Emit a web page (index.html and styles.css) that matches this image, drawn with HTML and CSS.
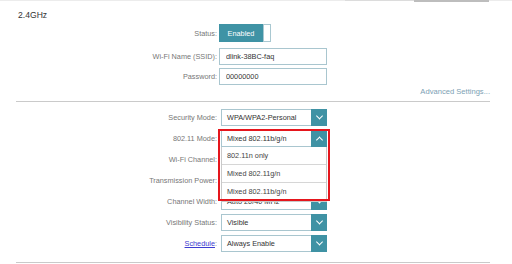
FILE: index.html
```html
<!DOCTYPE html>
<html lang="en">
<head>
  <meta charset="UTF-8" />
  <title>Wireless - 2.4GHz</title>
  <link rel="stylesheet" href="styles.css">
</head>
<body>
  <div class="tabline">
    <span class="tab"></span>
    <span class="tab active"></span>
  </div>
  <main class="panel">
    <h2>2.4GHz</h2>
    <div class="form basic">
      <div class="row status-row">
        <label>Status:</label>
        <div class="toggle"><span class="on">Enabled</span><span class="knob"></span></div>
      </div>
      <div class="row">
        <label>Wi-Fi Name (SSID):</label>
        <input class="field" type="text" value="dlink-38BC-faq">
      </div>
      <div class="row">
        <label>Password:</label>
        <input class="field" type="text" value="00000000">
      </div>
    </div>
    <div class="adv">Advanced Settings...</div>
    <div class="form advanced">
      <div class="row">
        <label>Security Mode:</label>
        <div class="select"><span>WPA/WPA2-Personal</span><i class="arrow down"></i></div>
      </div>
      <div class="row mode-row">
        <label>802.11 Mode:</label>
        <div class="select"><span>Mixed 802.11b/g/n</span><i class="arrow up"></i></div>
        <ul class="dropdown">
          <li>802.11n only</li>
          <li>Mixed 802.11g/n</li>
          <li>Mixed 802.11b/g/n</li>
        </ul>
        <div class="highlight"></div>
      </div>
      <div class="row">
        <label>Wi-Fi Channel:</label>
        <div class="select"><span></span><i class="arrow down"></i></div>
      </div>
      <div class="row">
        <label>Transmission Power:</label>
        <div class="select"><span></span><i class="arrow down"></i></div>
      </div>
      <div class="row">
        <label>Channel Width:</label>
        <div class="select"><span>Auto 20/40 MHz</span><i class="arrow down"></i></div>
      </div>
      <div class="row">
        <label>Visibility Status:</label>
        <div class="select"><span>Visible</span><i class="arrow down"></i></div>
      </div>
      <div class="row">
        <label><a href="#">Schedule</a>:</label>
        <div class="select"><span>Always Enable</span><i class="arrow down"></i></div>
      </div>
    </div>
  </main>
</body>
</html>
```

FILE: styles.css
```css
body {
  margin: 0;
  font-family: "Liberation Sans", Arial, sans-serif;
  background-color: #fff;
  color: #333;
}
.tabline {
  height: 1px;
  background-color: #ececec;
  display: flex;
  padding-left: 345px;
}
.tab {
  width: 69px;
  height: 1px;
  background-color: #dcdcdc;
}
.tab.active {
  width: 75px;
  height: 2px;
  background-color: #bdbdbd;
}
.panel {
  margin: 0 22px 0 16px;
  padding-top: 8px;
}
h2 {
  margin: 0 0 0 2px;
  font-size: 8.6px;
  font-weight: normal;
  color: #333;
  line-height: 12px;
}
.form {
  display: flex;
  flex-direction: column;
}
.row {
  display: grid;
  grid-template-columns: 201px 108px;
  column-gap: 2px;
  align-items: center;
  font-size: 7.3px;
}
.row label {
  text-align: right;
  color: #777;
}
.row label a {
  color: #3c3cd0;
}
.basic {
  padding-top: 3px;
}
.basic .row {
  margin-bottom: 3px;
}
.basic .status-row {
  margin-bottom: 6px;
}
.basic .row:last-child {
  margin-bottom: 0;
}
.toggle {
  display: flex;
  height: 18px;
  width: 52px;
}
.toggle .on {
  flex: 1;
  background-color: #3f93a5;
  color: #fff;
  display: flex;
  align-items: center;
  justify-content: center;
}
.toggle .knob {
  width: 6px;
  border: 1px solid #a9c8d1;
  background-color: #fff;
}
.field {
  box-sizing: border-box;
  height: 17px;
  width: 108px;
  margin: 0;
  padding: 0 6px;
  border: 1px solid #a9c6cf;
  font: inherit;
  color: #333;
  outline: none;
}
.adv {
  margin-top: 2px;
  text-align: right;
  font-size: 7.6px;
  color: #7d9fb4;
  line-height: 10px;
  padding-bottom: 4px;
  border-bottom: 1px solid #cacaca;
}
.advanced {
  padding-top: 7px;
  padding-bottom: 10px;
  border-bottom: 1px solid #cacaca;
}
.advanced .row {
  grid-template-columns: 201px 106px;
  column-gap: 4px;
  margin-bottom: 4px;
}
.advanced .row:last-child {
  margin-bottom: 0;
}
.select {
  box-sizing: border-box;
  height: 17px;
  display: flex;
  align-items: stretch;
  border: 1px solid #a9c6cf;
  border-right: none;
  background-color: #fff;
  color: #333;
}
.select span {
  flex: 1;
  display: flex;
  align-items: center;
  padding-left: 5px;
}
.arrow {
  width: 16px;
  margin: -1px 0;
  background-color: #3f92a4;
  display: flex;
  align-items: center;
  justify-content: center;
}
.arrow::after {
  content: "";
  width: 4px;
  height: 4px;
  border-right: 1.3px solid #fff;
  border-bottom: 1.3px solid #fff;
}
.arrow.down::after {
  transform: translateY(-1.5px) rotate(45deg);
}
.arrow.up::after {
  transform: translateY(1.5px) rotate(-135deg);
}
.mode-row {
  position: relative;
  z-index: 2;
}
.dropdown {
  position: absolute;
  left: 205px;
  top: 17px;
  width: 106px;
  box-sizing: border-box;
  margin: 0;
  padding: 0;
  list-style: none;
  background-color: #fff;
  border: 1px solid #c9c9c9;
  border-top: none;
}
.dropdown li {
  height: 18px;
  line-height: 18px;
  padding-left: 5px;
  color: #444;
  border-bottom: 1px solid #d6d6d6;
  box-sizing: border-box;
}
.dropdown li:last-child {
  border-bottom: none;
}
.highlight {
  position: absolute;
  left: 202px;
  top: -1px;
  width: 112px;
  height: 72px;
  box-sizing: border-box;
  border: 2px solid #e5161d;
}
```
